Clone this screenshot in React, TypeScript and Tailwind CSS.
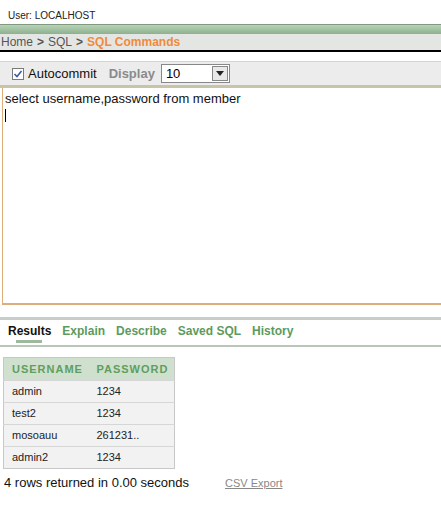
import React from "react";

const rows = [
  { user: "admin", pass: "1234" },
  { user: "test2", pass: "1234" },
  { user: "mosoauu", pass: "261231.." },
  { user: "admin2", pass: "1234" },
];

const tabs = ["Explain", "Describe", "Saved SQL", "History"];

export default function App() {
  return (
    <div className="h-[521px] w-[441px] overflow-hidden bg-white font-['Liberation_Sans',Arial,sans-serif] text-black">
      {/* 상단 사용자 */}
      <div className="h-[24px] pl-[8px] pt-[11px] text-[10px] leading-none text-[#222]">User: LOCALHOST</div>
      <div className="h-[10px] border-t border-[#7f9a7f] bg-gradient-to-b from-[#b9d2b9] via-[#a2c2a2] to-[#8fb08f]" />
      {/* 경로 */}
      <div className="flex h-[18px] items-center border-b-2 border-black bg-[#e4e6e4] pl-[1px] text-[12px] leading-none">
        <span className="text-[#555]">Home</span>
        <span className="mx-[4px] font-bold text-[#555]">&gt;</span>
        <span className="text-[#555]">SQL</span>
        <span className="mx-[4px] font-bold text-[#555]">&gt;</span>
        <span className="font-bold text-[#f08a3c]">SQL Commands</span>
      </div>

      {/* 툴바 */}
      <div className="mt-[9px] flex h-[27px] items-center border-t border-[#d4d4d4] border-b-[3px] border-b-[#c9c3a8] bg-[#ececec] pl-[12px]">
        <span className="flex h-[12px] w-[12px] items-center justify-center border border-[#7a7a7a] bg-white">
          <svg width="10" height="10" viewBox="0 0 10 10">
            <path d="M1.5 5 L4 7.5 L8.5 2" fill="none" stroke="#3b5aa8" strokeWidth="1.6" />
          </svg>
        </span>
        <span className="ml-[4px] text-[13px] text-[#111]">Autocommit</span>
        <span className="ml-[12px] text-[13px] font-bold text-[#8a8a8a]">Display</span>
        <div className="ml-[6px] flex h-[19px] w-[69px] items-center border border-[#888] bg-white">
          <span className="flex-1 pl-[4px] text-[13px]">10</span>
          <span className="mr-[1px] flex h-[15px] w-[16px] items-center justify-center border border-[#888] bg-[#e8e8e8]">
            <svg width="8" height="5" viewBox="0 0 8 5">
              <path d="M0 0 H8 L4 5 Z" fill="#222" />
            </svg>
          </span>
        </div>
      </div>

      {/* 입력 영역 */}
      <div className="ml-[2px] h-[217px] border-l border-b-2 border-[#dcae7c] bg-white pl-[2px] pt-[3px]">
        <div className="text-[13px] leading-[15px] text-[#111]">select username,password from member</div>
        <div className="mt-[3px] h-[13px] w-px bg-black" />
      </div>

      {/* 탭 */}
      <div className="mt-[12px] border-t-[3px] border-[#c9cdc9]">
        <div className="flex h-[20px] items-end gap-[11px] pl-[8px] text-[12px] font-bold">
          <div className="relative text-[#111]">
            Results
            <div className="absolute left-[8px] top-[18px] h-[3px] w-[26px] bg-[#9db89d]" />
          </div>
          {tabs.map((t) => (
            <span key={t} className="text-[#5d9a5d]">
              {t}
            </span>
          ))}
        </div>
        <div className="mt-[5px] h-[2px] bg-[#b9c6b9]" />
      </div>

      {/* 결과 테이블 */}
      <table className="ml-[3px] mt-[10px] w-[172px] border-collapse border border-[#c8c8c8] text-[11px]">
        <thead>
          <tr className="h-[23px] bg-[#cfe0cf] text-left text-[#5e9e5e]">
            <th className="pl-[8px] font-bold tracking-[0.09em]">USERNAME</th>
            <th className="font-bold tracking-[0.09em]">PASSWORD</th>
          </tr>
        </thead>
        <tbody>
          {rows.map((r) => (
            <tr key={r.user} className="h-[22px] border-t border-[#d6d6d6] bg-[#f2f2f2] text-[#222]">
              <td className="w-[93px] pl-[8px]">{r.user}</td>
              <td>{r.pass}</td>
            </tr>
          ))}
        </tbody>
      </table>

      <div className="mt-[4px] flex items-center pl-[4px]">
        <span className="text-[13px] text-[#111]">4 rows returned in 0.00 seconds</span>
        <span className="ml-[36px] text-[11px] text-[#888] underline">CSV Export</span>
      </div>
    </div>
  );
}
